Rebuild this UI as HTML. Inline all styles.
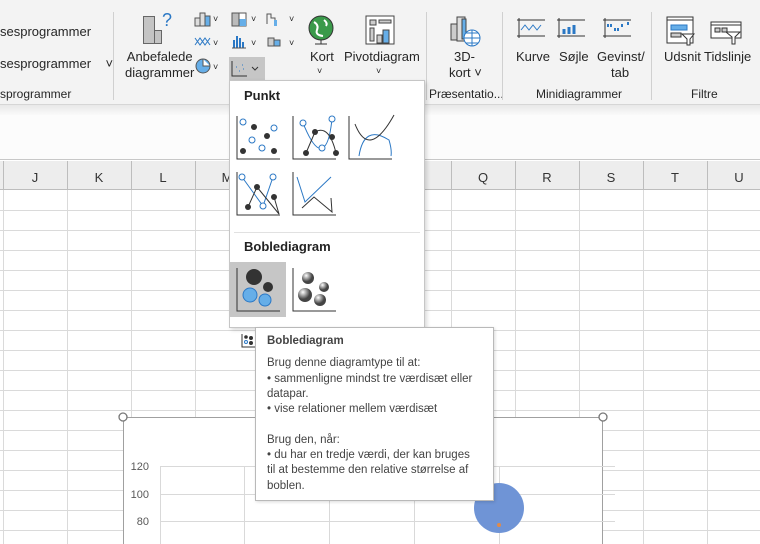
<!DOCTYPE html>
<html style="width:760px;height:544px;overflow:hidden"><head><meta charset="utf-8"><style>
*{margin:0;padding:0;box-sizing:border-box}
body{width:760px;height:544px;overflow:hidden;position:relative;background:#fff;font-family:"Segoe UI","Liberation Sans",sans-serif;color:#222}
.a{position:absolute}
.t{position:absolute;font-size:13px;white-space:nowrap;color:#262626}
</style></head><body>
<div class="a" style="left:0;top:0;width:760px;height:105px;background:#f3f3f3;border-bottom:1px solid #d6d6d6"></div>
<div class="a" style="left:0;top:105px;width:760px;height:10px;background:linear-gradient(#e8e8e8,#fafafa)"></div>
<div class="a" style="left:0;top:115px;width:760px;height:45px;background:#fcfcfc;border-bottom:1px solid #c8c8c8"></div>
<div class="t" style="left:0;top:24px">sesprogrammer</div>
<div class="t" style="left:0;top:56px">sesprogrammer&nbsp;&nbsp;&nbsp;&nbsp;˅</div>
<div class="t" style="left:0;top:87px;font-size:12px">sprogrammer</div>
<div class="a" style="left:113px;top:12px;width:1px;height:88px;background:#d0d0d0"></div>
<div class="a" style="left:143px;top:16px;width:12px;height:28px;background:#c4c4c4;border:1px solid #666"></div>
<div class="a" style="left:154px;top:30px;width:8px;height:14px;background:#c4c4c4;border:1px solid #666"></div>
<div class="t" style="left:162px;top:10px;font-size:18px;color:#2b78c5">?</div>
<div class="t" style="left:125px;top:49px;text-align:center;line-height:16px">Anbefalede<br>diagrammer</div>
<svg class="a" style="left:192px;top:10px" width="100" height="72" viewBox="0 0 100 72" fill="none" stroke="#555">
<rect x="3" y="8" width="5" height="8" fill="#ddd"/><rect x="8" y="3" width="5" height="13" fill="#ddd"/><rect x="13" y="6" width="5" height="10" fill="#66aee8"/>
<path d="M3 35 L8 28 L13 35 L18 28 M3 28 L8 35 L13 28 L18 35" stroke="#2b78c5"/>
<circle cx="11" cy="56" r="7" fill="#66aee8"/><path d="M11 49 V56 H18" fill="#fff"/>
<rect x="40" y="3" width="14" height="13" fill="#fff"/><rect x="47" y="9" width="7" height="7" fill="#66aee8" stroke="none"/><rect x="40" y="3" width="7" height="13" fill="#bbb"/>
<path d="M42 38V30M45 38V26M48 38V28M51 38V32" stroke="#2b78c5" stroke-width="2"/><path d="M40 38H54"/>
<rect x="37" y="47" width="36" height="23" fill="#c8c8c8" stroke="none"/><path d="M41 52V65H55" stroke="#444"/><path d="M45 58h1M49 56h1M52 60h1" stroke="#66aee8"/>
<path d="M75 14V4h4v4h4v8" /><rect x="82" y="10" width="3" height="6" fill="#66aee8" stroke="none"/>
<rect x="76" y="28" width="6" height="8" fill="#ccc"/><rect x="82" y="30" width="6" height="6" fill="#66aee8"/>
</svg>
<div class="t" style="left:213px;top:14px;font-size:9px">˅</div><div class="t" style="left:251px;top:14px;font-size:9px">˅</div><div class="t" style="left:289px;top:14px;font-size:9px">˅</div>
<div class="t" style="left:213px;top:38px;font-size:9px">˅</div><div class="t" style="left:251px;top:38px;font-size:9px">˅</div><div class="t" style="left:289px;top:38px;font-size:9px">˅</div>
<div class="t" style="left:213px;top:62px;font-size:9px">˅</div><div class="t" style="left:252px;top:62px;font-size:9px">˅</div>
<svg class="a" style="left:306px;top:14px" width="30" height="32"><circle cx="15" cy="14" r="12" fill="#3a9a4a" stroke="#333"/><path d="M8 8q5 3 3 8t6 6M18 6q4 3 2 6" stroke="#fff" fill="none" stroke-width="2"/><path d="M9 30h12M15 26v4" stroke="#333"/></svg>
<div class="t" style="left:310px;top:49px">Kort</div><div class="t" style="left:317px;top:66px;font-size:9px">˅</div>
<svg class="a" style="left:364px;top:14px" width="32" height="32" fill="none" stroke="#444"><rect x="2" y="2" width="28" height="28" fill="#fff"/><rect x="6" y="6" width="6" height="5" fill="#ccc"/><rect x="15" y="6" width="12" height="3" fill="#ccc"/><rect x="6" y="14" width="4" height="13" fill="#ccc"/><rect x="13" y="21" width="5" height="8" fill="#ccc"/><rect x="19" y="16" width="6" height="13" fill="#66aee8"/></svg>
<div class="t" style="left:344px;top:49px">Pivotdiagram</div><div class="t" style="left:376px;top:66px;font-size:9px">˅</div>
<div class="a" style="left:426px;top:12px;width:1px;height:88px;background:#d0d0d0"></div>
<svg class="a" style="left:448px;top:14px" width="34" height="34" fill="none" stroke="#444"><rect x="3" y="10" width="6" height="16" fill="#ccc"/><rect x="9" y="3" width="8" height="24" fill="#ddd"/><rect x="14" y="5" width="4" height="20" fill="#66aee8"/><circle cx="24" cy="24" r="8" fill="#fff" stroke="#2b78c5"/><path d="M16 24h16M24 16v16M18 19h12M18 29h12" stroke="#2b78c5"/></svg>
<div class="t" style="left:454px;top:49px">3D-</div><div class="t" style="left:449px;top:65px">kort ˅</div>
<div class="t" style="left:429px;top:87px;font-size:12px">Præsentatio...</div>
<div class="a" style="left:502px;top:12px;width:1px;height:88px;background:#d0d0d0"></div>
<svg class="a" style="left:515px;top:16px" width="130" height="22" fill="none" stroke="#333">
<path d="M2 4h28M2 20h28M4 2v20"/><path d="M6 14l4-5 4 5 4-5 4 5 4-5" stroke="#2b78c5"/>
<path d="M42 4h28M42 20h28M44 2v20"/><path d="M49 18v-5M54 18v-7M59 18v-9" stroke="#2b78c5" stroke-width="3"/>
<path d="M88 4h28M88 20h28M90 2v20"/><path d="M93 8v3M96 8v3M100 12v3M103 12v3M107 8v3M113 6v3" stroke="#2b78c5" stroke-width="2"/>
</svg>
<div class="t" style="left:516px;top:49px">Kurve</div><div class="t" style="left:559px;top:49px">Søjle</div>
<div class="t" style="left:597px;top:49px">Gevinst/</div><div class="t" style="left:611px;top:65px">tab</div>
<div class="t" style="left:536px;top:87px;font-size:12px">Minidiagrammer</div>
<div class="a" style="left:651px;top:12px;width:1px;height:88px;background:#d0d0d0"></div>
<svg class="a" style="left:664px;top:14px" width="90" height="32" fill="none" stroke="#333">
<rect x="3" y="3" width="26" height="26" fill="#fff"/><path d="M3 6h26"/><rect x="7" y="11" width="16" height="5" fill="#66aee8" stroke="#2b78c5"/><rect x="7" y="19" width="10" height="4" fill="#ccc"/><path d="M18 20h12l-4 5v6h-3v-6z" fill="#fff"/>
<rect x="47" y="8" width="30" height="16" fill="#fff"/><path d="M47 11h30"/><rect x="51" y="14" width="5" height="4" fill="#ccc"/><rect x="58" y="14" width="5" height="4" fill="#ccc"/><path d="M62 18h14l-5 5v7h-3v-7z" fill="#fff"/>
</svg>
<div class="t" style="left:664px;top:49px">Udsnit</div><div class="t" style="left:704px;top:49px">Tidslinje</div>
<div class="t" style="left:691px;top:87px;font-size:12px">Filtre</div>
<div class="a" style="left:0;top:161px;width:760px;height:29px;background:#ededed;border-bottom:1px solid #bdbdbd"></div>
<svg class="a" style="left:0;top:161px" width="760" height="383">
<g stroke="#bdbdbd"><path d="M3.5 0v29M67.5 0v29M131.5 0v29M195.5 0v29M259.5 0v29M323.5 0v29M387.5 0v29M451.5 0v29M515.5 0v29M579.5 0v29M643.5 0v29M707.5 0v29"/></g>
<g stroke="#dadada"><path d="M3.5 29v360M67.5 29v360M131.5 29v360M195.5 29v360M259.5 29v360M323.5 29v360M387.5 29v360M451.5 29v360M515.5 29v360M579.5 29v360M643.5 29v360M707.5 29v360"/>
<path d="M0 49.5h760M0 69.5h760M0 89.5h760M0 109.5h760M0 129.5h760M0 149.5h760M0 169.5h760M0 189.5h760M0 209.5h760M0 229.5h760M0 249.5h760M0 269.5h760M0 289.5h760M0 309.5h760M0 329.5h760M0 349.5h760M0 369.5h760"/></g>
<g font-size="13" fill="#333" text-anchor="middle" font-family="Liberation Sans"><text x="35" y="21">J</text><text x="99" y="21">K</text><text x="163" y="21">L</text><text x="227" y="21">M</text><text x="483" y="21">Q</text><text x="547" y="21">R</text><text x="611" y="21">S</text><text x="675" y="21">T</text><text x="739" y="21">U</text></g>
</svg>
<div class="a" style="left:123px;top:417px;width:480px;height:127px;background:#fff;border:1px solid #a0a0a0;border-bottom:none"></div>
<svg class="a" style="left:118px;top:412px" width="500" height="132">
<g stroke="#d9d9d9"><path d="M42 54.5h455M42 82.5h455M42 109.5h455M42.5 54v80M126.5 54v80M211.5 54v80M296.5 54v80M381.5 54v80"/></g>
<g font-size="11" fill="#595959" text-anchor="end" font-family="Liberation Sans"><text x="31" y="58">120</text><text x="31" y="86">100</text><text x="31" y="113">80</text></g>
<circle cx="381" cy="96" r="25" fill="#6f94d6"/><circle cx="381" cy="113" r="2" fill="#e08b4a"/>
<circle cx="5" cy="5" r="4" fill="#fff" stroke="#777" stroke-width="1.3"/><circle cx="485" cy="5" r="4" fill="#fff" stroke="#777" stroke-width="1.3"/>
</svg>
<div class="a" style="left:229px;top:57px;width:36px;height:23px;background:#c6c6c6"></div>
<svg class="a" style="left:229px;top:57px" width="36" height="23" fill="none" stroke="#333"><path d="M3 4v15h15"/><path d="M7 10h1M10 14h1M13 8h1M14 12h1" stroke="#2b78c5"/><path d="M23 10l3 3 3-3"/></svg>
<div class="a" style="left:229px;top:80px;width:196px;height:248px;background:#fff;border:1px solid #c6c6c6;box-shadow:2px 2px 4px rgba(0,0,0,.15)"></div>
<div class="t" style="left:244px;top:88px;font-weight:bold;color:#222">Punkt</div>
<div class="a" style="left:234px;top:232px;width:186px;height:1px;background:#e1e1e1"></div>
<div class="t" style="left:244px;top:239px;font-weight:bold;color:#222">Boblediagram</div>
<div class="a" style="left:230px;top:262px;width:56px;height:55px;background:#c6c6c6"></div>
<svg class="a" style="left:229px;top:110px" width="196" height="220" fill="none" stroke="#333" stroke-width="1">
<path d="M8 6v43h43M64 6v43h43M120 6v43h43M8 62v43h43M64 62v43h43M8 158v43h43M64 158v43h43"/>
<g fill="#333" stroke="none"><circle cx="25" cy="17" r="3"/><circle cx="38" cy="26" r="3"/><circle cx="14" cy="41" r="3"/><circle cx="45" cy="41" r="3"/>
<circle cx="77" cy="43" r="3"/><circle cx="86" cy="22" r="3"/><circle cx="103" cy="27" r="3"/><circle cx="107" cy="43" r="3"/>
<circle cx="28" cy="77" r="3"/><circle cx="45" cy="87" r="3"/><circle cx="19" cy="97" r="3"/></g>
<g stroke="#2b78c5" fill="#fff"><circle cx="14" cy="12" r="3"/><circle cx="45" cy="18" r="3"/><circle cx="23" cy="30" r="3"/><circle cx="33" cy="38" r="3"/>
<path d="M74 13Q85 40 92 38 100 38 103 9" fill="none"/><circle cx="74" cy="13" r="3"/><circle cx="103" cy="9" r="3"/><circle cx="93" cy="38" r="3"/>
<path d="M130 46Q135 14 160 30 163 40 162 46" fill="none"/>
<path d="M13 67L34 96 44 67" fill="none"/><circle cx="13" cy="67" r="3"/><circle cx="44" cy="67" r="3"/><circle cx="34" cy="96" r="3"/>
<path d="M68 67L76 92 102 67" fill="none"/></g>
<path d="M77 43L86 22Q100 14 107 43M126 14Q140 50 165 5M19 97L28 77 50 104 45 87M73 98L85 87 103 102 102 88"/>
<circle cx="25" cy="167" r="8" fill="#333" stroke="none"/><circle cx="39" cy="177" r="5" fill="#333" stroke="none"/>
<g fill="#66aee8" stroke="#2b78c5"><circle cx="21" cy="185" r="7"/><circle cx="36" cy="190" r="6"/></g>
<defs><radialGradient id="g" cx=".35" cy=".3"><stop offset="0" stop-color="#fff"/><stop offset="1" stop-color="#444"/></radialGradient></defs>
<g fill="url(#g)" stroke="none"><circle cx="79" cy="168" r="6"/><circle cx="95" cy="177" r="5"/><circle cx="76" cy="185" r="7"/><circle cx="91" cy="190" r="6"/></g>
</svg>
<svg class="a" style="left:240px;top:333px" width="16" height="16" fill="none" stroke="#333"><path d="M2 1v13h13"/><circle cx="6" cy="9" r="1.5" stroke="#2b78c5"/><circle cx="6" cy="4" r="1.3" fill="#333"/><circle cx="11" cy="5" r="1.5" fill="#333"/><circle cx="11" cy="10" r="1.5" fill="#333"/></svg>
<div class="a" style="left:255px;top:327px;width:239px;height:174px;background:#fff;border:1px solid #b9b9b9;box-shadow:1px 1px 3px rgba(0,0,0,.15);padding:6px 0 0 11px;font-size:11.5px;line-height:15.3px;color:#444">
<div style="font-weight:bold;margin-bottom:7px">Boblediagram</div>
<div>Brug denne diagramtype til at:<br>• sammenligne mindst tre værdisæt eller<br>datapar.<br>• vise relationer mellem værdisæt<br><br>Brug den, når:<br>• du har en tredje værdi, der kan bruges<br>til at bestemme den relative størrelse af<br>boblen.</div>
</div>
</body></html>
